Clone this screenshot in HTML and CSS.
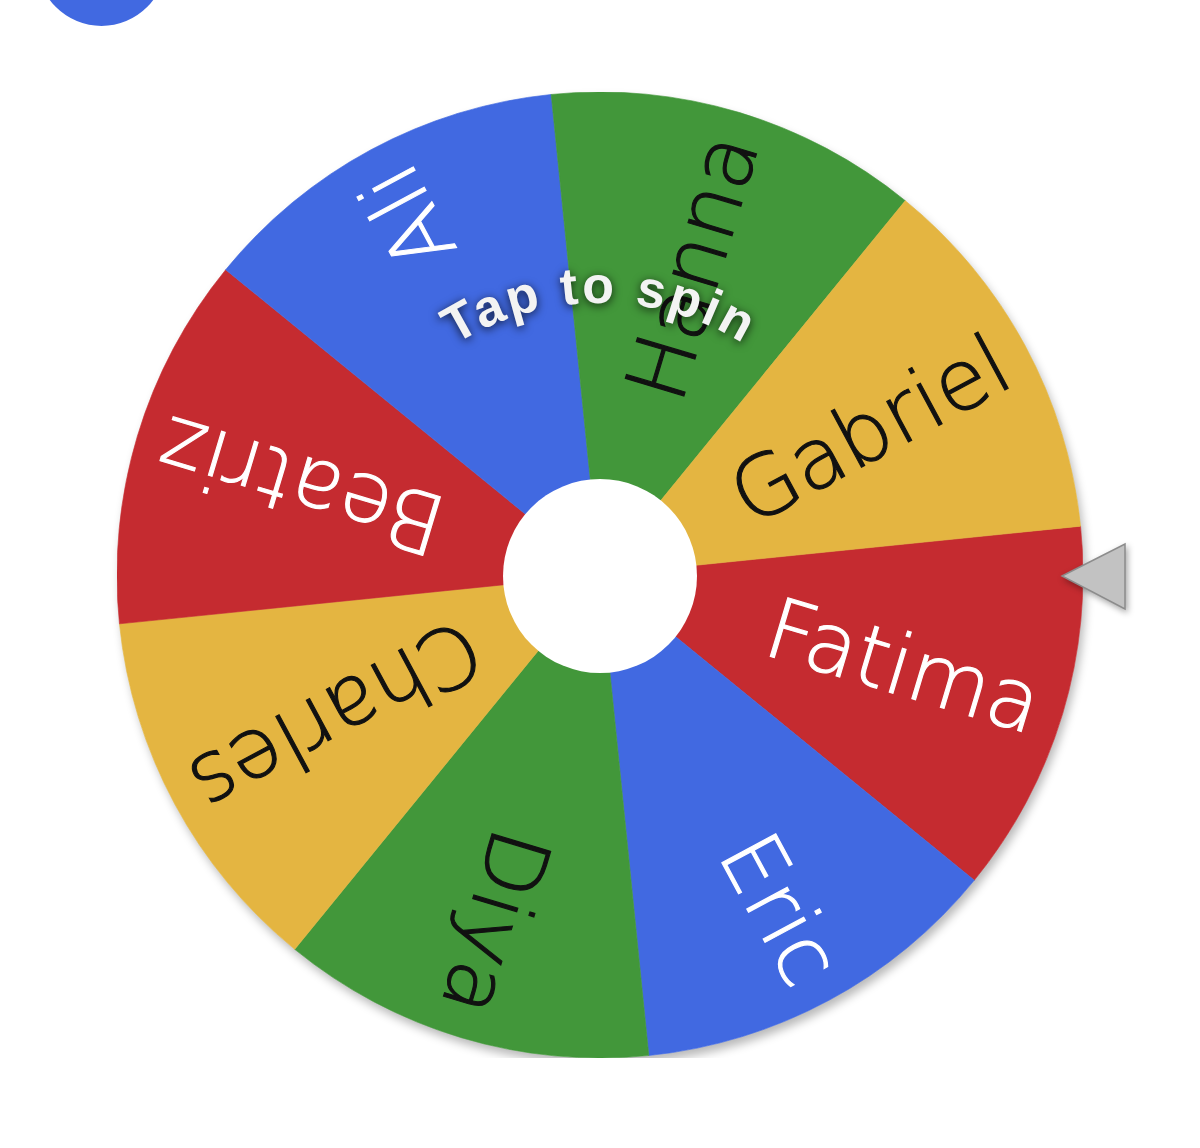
FILE: index.html
```html
<!DOCTYPE html>
<html lang="en">
<head>
    <meta charset="UTF-8">
    <meta name="viewport" content="width=device-width, initial-scale=1.0">
    <title>Wheel of Names</title>
    <link rel="stylesheet" href="styles.css">
</head>
<body>

    <div class="top-bar">
        <button class="fab" aria-label="Menu"></button>
    </div>

    <div class="stage">
        <div class="wheel-wrap">
            <div class="wheel">
                <svg class="wheel-svg" viewBox="-483 -483 966 966" width="966" height="966">
                    <defs>
                        <path id="spinArc" d="M-267.9 -47.2 A272 272 0 0 1 267.9 -47.2"/>
                    </defs>
                    <g class="slices">
                        <path class="slice red" transform="rotate(-5.8)" d="M0 0 L483 0 A483 483 0 0 1 341.53 341.53 Z"/>
                        <path class="slice blue" transform="rotate(39.2)" d="M0 0 L483 0 A483 483 0 0 1 341.53 341.53 Z"/>
                        <path class="slice green" transform="rotate(84.2)" d="M0 0 L483 0 A483 483 0 0 1 341.53 341.53 Z"/>
                        <path class="slice yellow" transform="rotate(129.2)" d="M0 0 L483 0 A483 483 0 0 1 341.53 341.53 Z"/>
                        <path class="slice red" transform="rotate(174.2)" d="M0 0 L483 0 A483 483 0 0 1 341.53 341.53 Z"/>
                        <path class="slice blue" transform="rotate(219.2)" d="M0 0 L483 0 A483 483 0 0 1 341.53 341.53 Z"/>
                        <path class="slice green" transform="rotate(264.2)" d="M0 0 L483 0 A483 483 0 0 1 341.53 341.53 Z"/>
                        <path class="slice yellow" transform="rotate(309.2)" d="M0 0 L483 0 A483 483 0 0 1 341.53 341.53 Z"/>
                    </g>
                    <g class="names">
                        <text class="name on-dark" transform="rotate(16.7)" x="458" y="29">Fatima</text>
                        <text class="name on-dark" transform="rotate(61.7)" x="458" y="29">Eric</text>
                        <text class="name on-light" transform="rotate(106.7)" x="458" y="29">Diya</text>
                        <text class="name on-light" transform="rotate(151.7)" x="458" y="29">Charles</text>
                        <text class="name on-dark" transform="rotate(196.7)" x="458" y="29">Beatriz</text>
                        <text class="name on-dark" transform="rotate(241.7)" x="458" y="29">Ali</text>
                        <text class="name on-light" transform="rotate(286.7)" x="458" y="29">Hanna</text>
                        <text class="name on-light" transform="rotate(331.7)" x="458" y="29">Gabriel</text>
                    </g>
                    <circle class="hub" cx="0" cy="1" r="97"/>
                    <text class="spin-label"><textPath href="#spinArc" startOffset="50%">Tap to spin</textPath></text>
                </svg>
            </div>

            <svg class="pointer" viewBox="0 0 68 70" width="68" height="70">
                <polygon points="2,34 65,2 65,67" />
            </svg>
        </div>
    </div>

</body>
</html>
```

FILE: styles.css
```css
body {
    margin: 0;
    background-color: #ffffff;
    font-family: "DejaVu Sans", sans-serif;
    overflow: hidden;
}
.top-bar {
    display: flow-root;
    height: 26px;
}
.fab {
    display: block;
    width: 129px;
    height: 129px;
    margin: -103px 0 0 37px;
    border: none;
    border-radius: 50%;
    background-color: #4169e1;
    cursor: pointer;
}
.stage {
    display: flex;
    justify-content: center;
    margin-top: 66px;
}
.wheel-wrap {
    position: relative;
    width: 966px;
    height: 966px;
}
.wheel {
    width: 966px;
    height: 966px;
    border-radius: 50%;
    box-shadow: 3px 6px 10px rgba(0, 0, 0, 0.28);
}
.wheel-svg {
    display: block;
}
.slice {
    stroke-width: 0.6;
}
.slice.red {
    fill: #c52b30;
    stroke: #c52b30;
}
.slice.blue {
    fill: #4169e1;
    stroke: #4169e1;
}
.slice.green {
    fill: #42973a;
    stroke: #42973a;
}
.slice.yellow {
    fill: #e4b541;
    stroke: #e4b541;
}
.name {
    font-family: "DejaVu Sans", sans-serif;
    font-weight: 200;
    font-size: 84px;
    text-anchor: end;
    stroke-width: 1.1px;
}
.name.on-dark {
    fill: #ffffff;
    stroke: #ffffff;
}
.name.on-light {
    fill: #111111;
    stroke: #111111;
}
.hub {
    fill: #ffffff;
}
.spin-label {
    font-family: "Liberation Sans", Arial, sans-serif;
    font-weight: bold;
    font-size: 52px;
    letter-spacing: 3px;
    text-anchor: middle;
    fill: #f3f3f3;
    filter: drop-shadow(0 2px 5px rgba(0, 0, 0, 0.75));
}
.pointer {
    position: absolute;
    left: 943px;
    top: 450px;
    filter: drop-shadow(2px 3px 3px rgba(0, 0, 0, 0.35));
}
.pointer polygon {
    fill: #c2c2c2;
    stroke: #8c8c8c;
    stroke-width: 1.5;
    stroke-linejoin: miter;
}
```
